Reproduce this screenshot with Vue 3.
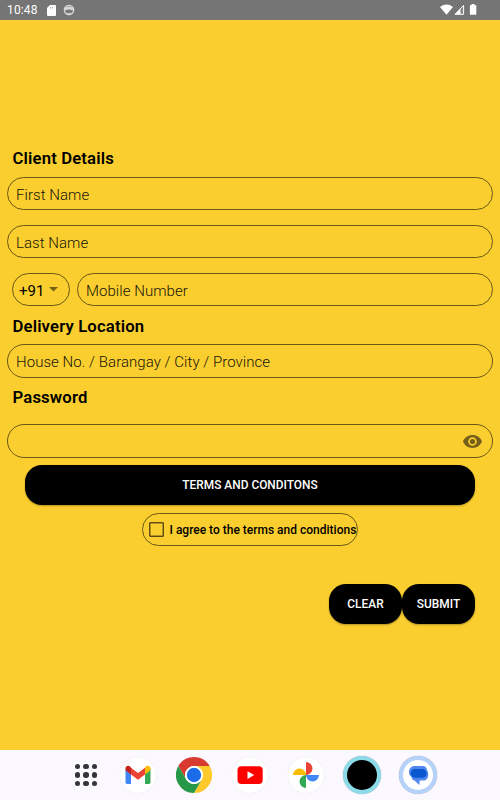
<script setup>
import { ref } from "vue";

// Form state
const firstName = ref("");
const lastName = ref("");
const mobile = ref("");
const address = ref("");
const password = ref("");
const showPassword = ref(false);
const agreed = ref(false);

// Reset every field
const clearForm = () => {
  firstName.value = "";
  lastName.value = "";
  mobile.value = "";
  address.value = "";
  password.value = "";
  agreed.value = false;
};
</script>

<template>
  <div class="screen">
    <!-- Status bar -->
    <header class="status-bar">
      <span class="clock">10:48</span>
      <svg class="sd" viewBox="0 0 9 11">
        <path d="M3 0h5a1 1 0 0 1 1 1v9a1 1 0 0 1-1 1H1a1 1 0 0 1-1-1V3z" fill="#fff" />
        <path d="M3.500 2v1.500M5.500 2v1.500" stroke="#999" stroke-width=".8" />
      </svg>
      <svg class="face" viewBox="0 0 12 12">
        <circle cx="6" cy="6" r="4.700" fill="none" stroke="#dedede" stroke-width="1.200" />
        <path d="M1.500 4Q6 1 10.500 4L9.500 6.500Q8 5.500 6 5.500T2.500 6.500z" fill="#d8d8d8" />
        <path d="M3.500 9Q6 10.200 8.500 9" fill="none" stroke="#ccc" />
      </svg>
      <svg class="signals" viewBox="0 0 38 12">
        <path d="M0 3Q6.500-1.800 13 3L6.500 10.800z" fill="#fff" />
        <path d="M23.600 1.400V10.300H15z" fill="#858585" stroke="#fff" stroke-width="1" />
        <path d="M20.500 5V10H15.500z" fill="#fff" />
        <path d="M31.500 0h3v1.200h1.800v9.600h-6.400V1.200h1.600z" fill="#fff" />
      </svg>
    </header>

    <!-- Registration form -->
    <main class="form">
      <h2 class="title">Client Details</h2>
      <input v-model="firstName" class="field" placeholder="First Name" />
      <input v-model="lastName" class="field spaced" placeholder="Last Name" />
      <div class="phone-row">
        <button class="code">
          +91
          <svg viewBox="0 0 8 4"><path d="M0 0h8L4 4z" fill="#75601a" /></svg>
        </button>
        <input v-model="mobile" class="field" placeholder="Mobile Number" />
      </div>

      <h2 class="title location">Delivery Location</h2>
      <input v-model="address" class="field tall" placeholder="House No. / Barangay / City / Province" />

      <h2 class="title password">Password</h2>
      <div class="field tall password-field">
        <input v-model="password" :type="showPassword ? 'text' : 'password'" />
        <svg class="eye" viewBox="1 4.500 22 15" @click="showPassword = !showPassword">
          <path
            d="M12 4.500C7 4.500 2.730 7.610 1 12c1.730 4.390 6 7.500 11 7.500s9.270-3.110 11-7.500c-1.730-4.390-6-7.500-11-7.500zM12 17c-2.760 0-5-2.240-5-5s2.240-5 5-5 5 2.240 5 5-2.240 5-5 5zm0-8a3 3 0 1 0 0 6 3 3 0 0 0 0-6z"
            fill="#75601a"
          />
        </svg>
      </div>

      <button class="btn terms">TERMS AND CONDITONS</button>
      <label class="agree">
        <input v-model="agreed" type="checkbox" />
        <span>I agree to the terms and conditions</span>
      </label>

      <div class="actions">
        <button class="btn" @click="clearForm">CLEAR</button>
        <button class="btn">SUBMIT</button>
      </div>
    </main>

    <!-- Dock -->
    <nav class="dock">
      <div class="apps"><i v-for="n in 9" :key="n"></i></div>

      <div class="app">
        <svg viewBox="0 0 36 36">
          <path d="M5.500 12v13.300q0 1.700 1.700 1.700h3.800V16z" fill="#4285f4" />
          <path d="M25 16v11h3.800q1.700 0 1.700-1.700V12z" fill="#34a853" />
          <path d="M25 10.700V17.500l5.500-4.200V11.500c0-3-3-3.500-4.700-2.200z" fill="#fbbc04" />
          <path d="M11 17.500v-6.800l7 5.300 7-5.300v6.800l-7 5.200z" fill="#ea4335" />
          <path d="M5.500 11.500v1.800l5.500 4.200v-6.800l-1.200-1.400C8 8 5.500 9 5.500 11.500z" fill="#c5221f" />
        </svg>
      </div>

      <div class="app">
        <svg viewBox="0 0 48 48">
          <path d="M24 12H44.785A24 24 0 0 0 3.215 12L13.608 30A12 12 0 0 1 24 12z" fill="#d93a2f" />
          <path d="M44.785 12H24A12 12 0 0 1 34.392 30L24 48A24 24 0 0 0 44.785 12z" fill="#fdc92b" />
          <path d="M24 48L34.392 30A12 12 0 0 1 13.608 30L3.215 12A24 24 0 0 0 24 48z" fill="#279847" />
          <circle cx="24" cy="24" r="12" fill="#fff" />
          <circle cx="24" cy="24" r="9.600" fill="#1a6ce8" />
        </svg>
      </div>

      <div class="app">
        <svg viewBox="0 0 36 36">
          <rect x="5.500" y="9.200" width="25.200" height="17.800" rx="4" fill="#f00" />
          <path d="M15.500 14.300v7.600l6.700-3.800z" fill="#fff" />
        </svg>
      </div>

      <div class="app">
        <svg viewBox="0 0 36 36">
          <path d="M18 5a6.500 6.500 0 0 1 0 13z" fill="#ea4335" />
          <path d="M31 18a6.500 6.500 0 0 1-13 0z" fill="#4285f4" />
          <path d="M18 31a6.500 6.500 0 0 1 0-13z" fill="#34a853" />
          <path d="M5 18a6.500 6.500 0 0 1 13 0z" fill="#fbbc04" />
        </svg>
      </div>

      <div class="app ring cyan"></div>

      <div class="app ring blue">
        <svg viewBox="0 0 30 30">
          <path d="M11.500 6h8c3 0 4.500 2 4.500 4.500 1 1 1.200 2.300 1.200 4 0 4-2.200 6-5.200 6h-3.500v4.500L11.500 20.500C9.500 20 8.800 18.500 8.500 17 6.800 15.500 6 14 6 12c0-3.500 2.500-6 5.500-6z" fill="#4f86ee" />
          <rect x="7.700" y="9" width="16" height="8.800" rx="4.400" fill="#0b57d0" />
        </svg>
      </div>
    </nav>
  </div>
</template>

<style>
body {
  margin: 0;
}
</style>

<style scoped>
* {
  box-sizing: border-box;
}

.screen {
  display: flex;
  flex-direction: column;
  height: 800px;
  background: #fbce2f;
  font-family: Roboto, "Liberation Sans", sans-serif;
  color: #000;
  overflow: hidden;
}

button,
input {
  font-family: inherit;
}

svg {
  display: block;
}

/* Status bar */
.status-bar {
  display: flex;
  align-items: center;
  height: 20px;
  padding: 0 22px 0 7px;
  background: #757575;
  color: #fff;
}

.clock {
  width: 40px;
  font-size: 12px;
  letter-spacing: 0.15px;
}

.sd {
  width: 9px;
  height: 11px;
}

.face {
  width: 12px;
  height: 12px;
  margin-left: 7px;
}

.signals {
  width: 38px;
  height: 12px;
  margin-left: auto;
}

/* Form */
.form {
  flex: 1;
  display: flex;
  flex-direction: column;
  padding: 128px 7px 0;
}

.title {
  margin: 0 0 8px 5.5px;
  font-size: 16.7px;
  font-weight: 600;
  line-height: 21px;
  letter-spacing: 0.15px;
}

.title.location {
  margin: 10px 0 7px 5.5px;
}

.title.password {
  margin: 9px 0 16px 5.5px;
}

.field {
  width: 100%;
  height: 33px;
  padding: 2px 8px 0;
  border: 1px solid #6b5714;
  border-radius: 17px;
  background: transparent;
  font-size: 15px;
  font-weight: 350;
  letter-spacing: 0.05px;
  outline: none;
}

.field.tall {
  height: 34px;
}

.field::placeholder {
  color: #16140a;
  opacity: 1;
}

.spaced {
  margin: 15px 0;
}

.phone-row {
  display: flex;
  gap: 7px;
  padding-left: 5px;
}

.phone-row .field {
  flex: 1;
  min-width: 0;
}

.code {
  display: flex;
  align-items: center;
  gap: 5px;
  width: 58px;
  height: 33px;
  padding: 2px 6px 0;
  border: 1px solid #6b5714;
  border-radius: 17px;
  background: transparent;
  color: #000;
  font-size: 15px;
}

.code svg {
  width: 9px;
  height: 4.5px;
  margin-top: -2px;
}

.password-field {
  display: flex;
  align-items: center;
  padding: 0 10px 0 8px;
}

.password-field input {
  flex: 1;
  border: 0;
  background: transparent;
  outline: none;
}

.eye {
  width: 19px;
  height: 13px;
}

/* Buttons */
.btn {
  height: 40px;
  padding: 0;
  border: 0;
  border-radius: 17px;
  background: #000;
  color: #fff;
  font-size: 11.9px;
  font-weight: 500;
  box-shadow: 0 1px 2px rgba(0, 0, 0, 0.3);
}

.terms {
  margin: 7px 18px 0;
}

.agree {
  display: flex;
  align-items: center;
  align-self: center;
  width: 216px;
  height: 33px;
  margin-top: 8px;
  padding: 1px 0 0 5.5px;
  border: 1px solid #6b5714;
  border-radius: 17px;
  font-size: 12px;
  font-weight: 500;
  white-space: nowrap;
}

.agree input {
  appearance: none;
  flex: none;
  width: 15px;
  height: 15px;
  margin: -1px 6px 0 0;
  border: 1px solid #5f4d10;
  border-radius: 1px;
  box-shadow: inset 0 0 0 0.5px #6b5714;
}

.actions {
  display: flex;
  justify-content: flex-end;
  margin-top: 38px;
  padding-right: 18px;
}

.actions .btn {
  width: 73px;
}

/* Dock */
.dock {
  display: flex;
  align-items: center;
  gap: 20px;
  height: 50px;
  padding-left: 75px;
  background: #fcf8ff;
}

.apps {
  display: grid;
  grid-template-columns: repeat(3, 5.4px);
  gap: 3px;
  width: 25px;
}

.apps i {
  height: 5.4px;
  border-radius: 50%;
  background: #33343d;
}

.app {
  width: 36px;
  height: 36px;
  border-radius: 50%;
  background: #fff;
  box-shadow: 0 0 1px rgba(0, 0, 0, 0.15);
}

.ring {
  width: 38px;
  height: 38px;
  margin: 0 -1px;
}

.cyan {
  border: 4px solid #8bdbe8;
  background: #000;
  box-shadow: 0 0 1px #999;
}

.blue {
  border: 4px solid #b5d2fb;
  box-shadow: 0 0 1px #999;
}
</style>
